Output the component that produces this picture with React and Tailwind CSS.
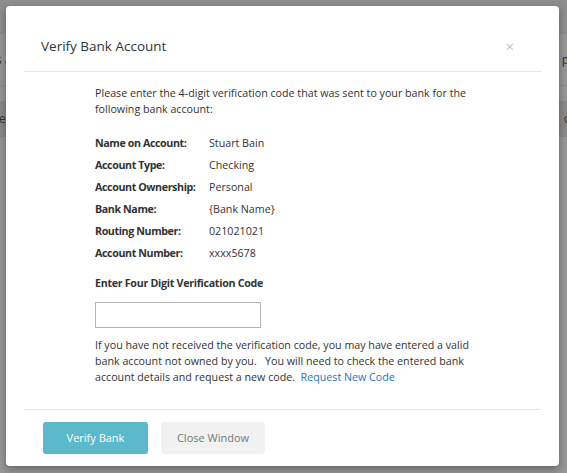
import React from 'react';

const details = [
  { label: 'Name on Account:', value: 'Stuart Bain' },
  { label: 'Account Type:', value: 'Checking' },
  { label: 'Account Ownership:', value: 'Personal' },
  { label: 'Bank Name:', value: '{Bank Name}' },
  { label: 'Routing Number:', value: '021021021' },
  { label: 'Account Number:', value: 'xxxx5678' },
];

const VerifyBankModal = () => (
  <div className="absolute left-[6px] top-[6px] w-[553px] h-[460px] bg-white rounded-[4px] shadow-[0_3px_9px_rgba(0,0,0,0.35)] flex flex-col px-[18px]">
    {/* Header */}
    <div className="h-[66px] flex items-center justify-between pl-[17px] pr-[27px] pt-[16px] border-b border-[#e5e5e5]">
      <h4 className="text-[13.5px] text-[#333]">Verify Bank Account</h4>
      <span className="text-[15px] leading-none text-[#c4c4c4]">×</span>
    </div>

    {/* Body */}
    <div className="flex-1 pl-[71px] pr-[60px] pt-[13px] text-[10.7px] leading-[16px] text-[#333]">
      <p>
        Please enter the 4-digit verification code that was sent to your bank for the following bank account:
      </p>

      <div className="mt-[15px] flex flex-col">
        {details.map((d) => (
          <div key={d.label} className="flex h-[22px] items-center">
            <span className="w-[114px] font-bold tracking-[-0.4px]">{d.label}</span>
            <span>{d.value}</span>
          </div>
        ))}
      </div>

      <p className="mt-[11px] font-bold tracking-[-0.3px]">Enter Four Digit Verification Code</p>

      <input
        type="text"
        className="mt-[11px] block w-[166px] h-[26px] border border-[#b5b5b5] outline-none"
      />

      <p className="mt-[9px]">
        If you have not received the verification code, you may have entered a valid bank account not owned by you.&nbsp;&nbsp; You will need to check the entered bank account details and request a new code.&nbsp;{' '}
        <a className="text-[#1a75c0]">Request New Code</a>
      </p>
    </div>

    {/* Footer */}
    <div className="h-[57px] border-t border-[#e5e5e5] flex items-start gap-[13px] pl-[19px] pt-[12px]">
      <button className="w-[105px] h-[32px] rounded-[3px] bg-[#5bb9cb] text-white text-[11px]">Verify Bank</button>
      <button className="w-[104px] h-[32px] rounded-[3px] bg-[#f1f1f1] text-[#777] text-[11px]">Close Window</button>
    </div>
  </div>
);

export default function App() {
  return (
    <div className="relative w-[567px] h-[473px] overflow-hidden bg-[#939393] font-['Open_Sans',sans-serif]">
      {/* Backdrop page content */}
      <div className="h-[34px] bg-[#8e8e8e]" />
      <div className="h-[52px] bg-[#979797] border-b border-[#8a8a8a] flex items-center justify-between text-[12px] text-[#333]">
        <span className="-ml-[4px]">s a</span>
        <span className="-mr-[2px]">p</span>
      </div>
      <div className="h-[15px] bg-[#979797]" />
      <div className="h-[36px] bg-[#8a8a8a] flex items-center justify-between text-[12px] text-[#333]">
        <span className="-ml-[1px]">e</span>
        <span className="-mr-[4px]">o</span>
      </div>
      <div className="h-[336px] bg-[#979797]" />

      <VerifyBankModal />
    </div>
  );
}
